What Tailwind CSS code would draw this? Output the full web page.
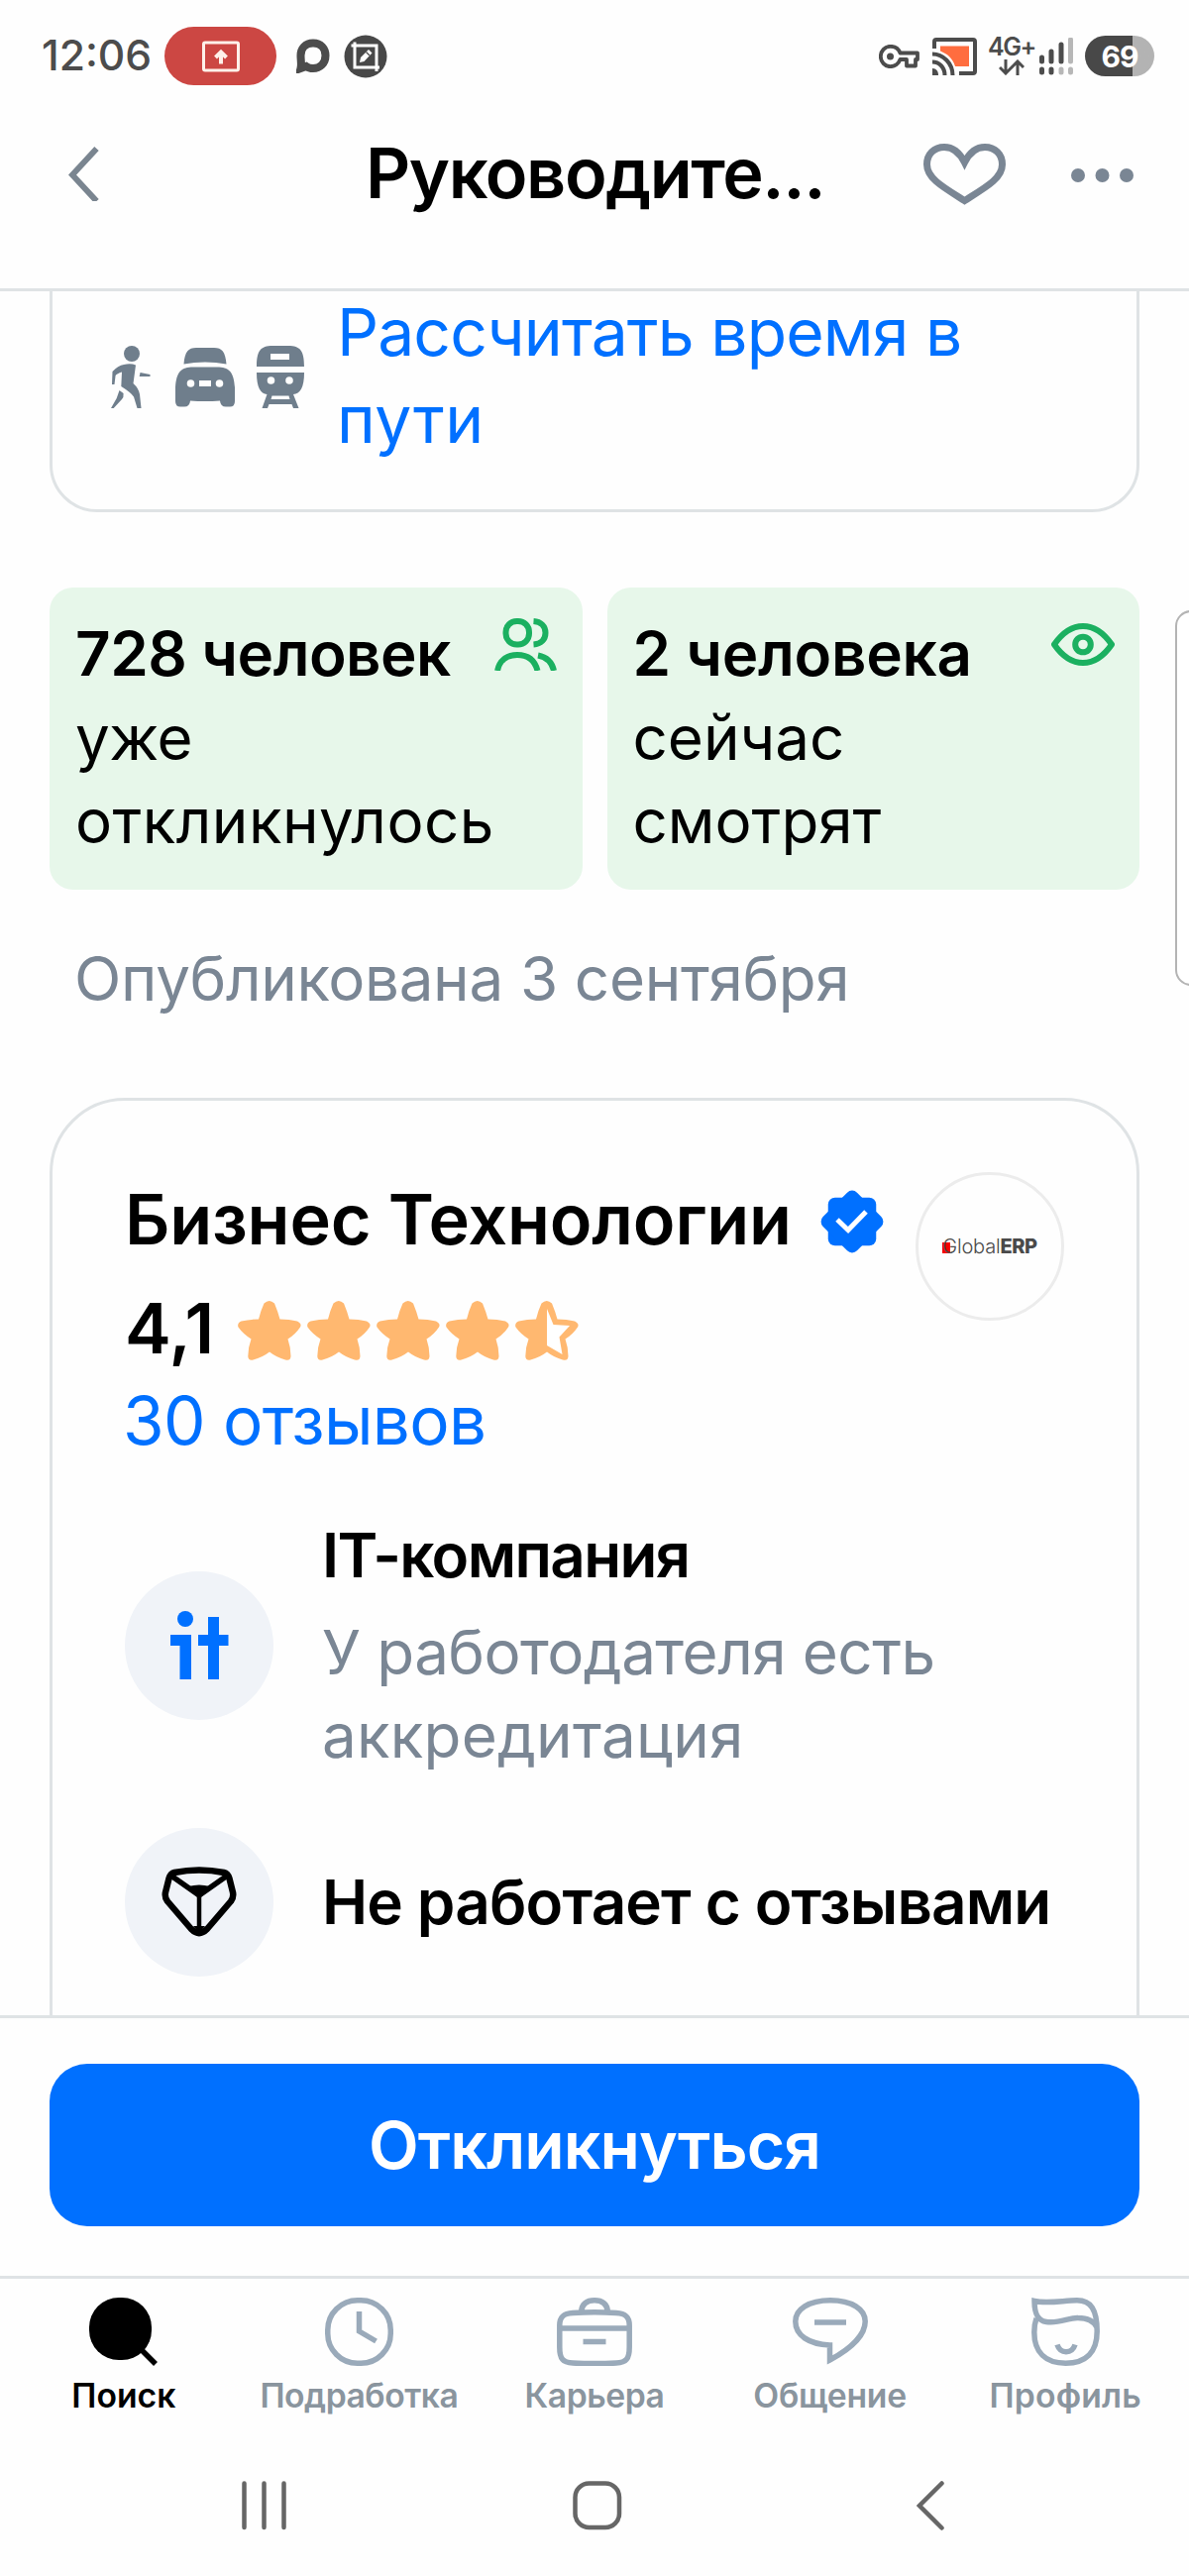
<!DOCTYPE html>
<html lang="ru">
<head>
<meta charset="utf-8">
<title>Вакансия</title>
<script src="https://cdn.jsdelivr.net/npm/@tailwindcss/browser@4"></script>
</head>
<body class="bg-white">
<div class="relative flex h-[2600px] w-[1200px] flex-col overflow-hidden bg-[#fefefe] font-['Inter','Noto_Sans',sans-serif] text-black">

  <!-- System status bar -->
  <div class="flex h-[113px] shrink-0 items-center justify-between pl-[42px] pr-[35px] text-[#4c4c4c]">
    <div class="flex items-center">
      <span class="w-[124px] whitespace-nowrap text-[42.6px] leading-none font-medium">12:06</span>
      <span class="flex h-[59px] w-[113px] items-center justify-center rounded-full bg-[#cc4743]">
        <svg width="38" height="32" viewBox="0 0 38 32" fill="none" stroke="#fff1ea" stroke-width="3"><rect x="1.5" y="2" width="35" height="28" rx="1.5"/><path d="M19 23.500V12M13.500 17L19 11.500L24.500 17" stroke-width="4"/></svg>
      </span>
      <svg class="ml-5" width="34" height="35" viewBox="0 0 34 35"><path d="M17 4.500C25 4.500 29.500 10 29.500 17C29.500 25 24 30 17 30C14 30 12 29.500 10 28L4.500 30C5.500 26 4.500 22 4.500 17C4.500 10 9 4.500 17 4.500Z" fill="none" stroke="#4c4c4c" stroke-width="8"/></svg>
      <svg class="ml-3.5" width="44" height="44" viewBox="0 0 44 44"><circle cx="22" cy="22" r="21.500" fill="#484848"/><path d="M11 7.500V33H36M7.500 11H33V37" fill="none" stroke="#fff" stroke-width="3"/><path d="M16 28L17 23L25 15L28.500 18.500L20.500 27Z" fill="#fff"/><path d="M22.500 17.500L26 21" stroke="#484848" stroke-width="1.200"/></svg>
    </div>
    <div class="flex items-center">
      <svg width="41" height="24" viewBox="0 0 41 24" fill="none" stroke="#4c4c4c" stroke-width="3.800"><path d="M21.500 8.500H39V15H37V21.500H28V15H21.500C20 19 16 22.200 11.500 22.200C6 22.200 1.800 17.500 1.800 12C1.800 6.500 6 1.800 11.500 1.800C16 1.800 20 4.500 21.500 8.500Z" stroke-linejoin="round"/><circle cx="11.500" cy="12" r="3.500" fill="#4c4c4c" stroke="none"/></svg>
      <svg class="ml-[13px]" width="45" height="38" viewBox="0 0 45 38" fill="none" stroke="#4c4c4c" stroke-width="4"><path d="M8 8.500H37V29H23C20 20 15 16.500 8 13.500Z" fill="#ff6d3f" stroke="none"/><path d="M2 11V4Q2 2 4 2H41Q43 2 43 4V34Q43 36 41 36H27"/><path d="M0 16.500C11 16.500 20.500 26 20.500 38M0 24.500C7 24.500 12.500 30 12.500 38"/><path d="M0 31C4 31 6 34 6 38H0Z" fill="#4c4c4c" stroke="none"/></svg>
      <div class="ml-[11px] flex w-[51px] flex-col items-start gap-1">
        <span class="text-[25px] leading-[18px] font-semibold tracking-[-1.500px] whitespace-nowrap">4G+</span>
        <svg class="ml-[11px]" width="26" height="16" viewBox="0 0 26 16" fill="none" stroke="#4c4c4c" stroke-width="3"><path d="M7 0V14M1 8L7 14L13 8M19 16V2M13 8L19 2L25 8"/></svg>
      </div>
      <svg class="ml-px" width="34" height="38" viewBox="0 0 34 38" stroke-width="5"><path d="M2.500 20V24M12 14V24M22 7V24M2.500 32V35M12 32V35" stroke="#4c4c4c" stroke-linecap="round"/><path d="M31.500 2V24M22 32V35M31.500 32V35" stroke="#b7b7b7" stroke-linecap="round"/></svg>
      <div class="ml-3 flex h-[41px] w-[70px] items-center justify-center rounded-full bg-linear-to-r from-[#484848] from-[68%] to-[#b3b3b3] to-[68%] text-[30px] leading-none font-bold tracking-[-1px] text-white">69</div>
    </div>
  </div>

  <!-- App header -->
  <header class="flex h-[181px] shrink-0 items-center border-b-[3px] border-[#dfe3e5] pr-[52px] pb-[55px] pl-[69px]">
    <svg width="31" height="56" viewBox="0 0 31 56" fill="none" stroke="#7a8590" stroke-width="6"><path d="M28.500 3L4 29.500L28.500 56"/></svg>
    <h1 class="ml-[269px] w-[563px] pt-px text-[70.2px] leading-none font-semibold tracking-[-1.4px] whitespace-nowrap">Руководите...</h1>
    <svg class="mt-[2px] shrink-0" width="83" height="62" viewBox="0 0 83 62" fill="none" stroke="#7a8694" stroke-width="7"><path d="M41.500 19C36 8 29 3.500 21 3.500C11 3.500 3.500 10.500 3.500 21C3.500 35 20 44 41.500 57.500C63 44 79.500 35 79.500 21C79.500 10.500 72 3.500 62 3.500C54 3.500 47 8 41.500 19Z"/></svg>
    <svg class="ml-[66px] mt-[5px] shrink-0" width="63" height="14" viewBox="0 0 63 14" fill="#7a8694"><circle cx="7" cy="7" r="7"/><circle cx="31.500" cy="7" r="7"/><circle cx="56" cy="7" r="7"/></svg>
  </header>

  <!-- Scrollable content -->
  <main class="h-[1740px] shrink-0 overflow-hidden px-[50px]">
    <section class="mt-[-44px] flex h-[267px] items-start rounded-b-[48px] border-[3px] border-[#dfe3e5] pt-[39px] pl-[59px]">
      <div class="flex w-[228px] shrink-0 pt-[57px]">
        <svg width="40" height="63" viewBox="0 0 40 63" fill="#6f7e8c"><circle cx="21" cy="8" r="8"/><path d="M13 19Q20 17.500 25 19.500L22.500 38Q28 43 29 49L30.500 63H26.500L23 51.500Q20 47 10.300 41L11 26.500Q6 28 4.600 30L3.500 39H1L1.500 26Q7 20 13 19Z"/><path d="M8.500 45L12.600 48Q13 52 11 54L2.700 63H0L5.700 53Z"/><path d="M29.500 27L39.500 29V31L28.700 31Z"/></svg>
        <svg class="ml-[25px] mt-[2px]" width="60" height="60" viewBox="0 0 60 60" fill="#6f7e8c" fill-rule="evenodd"><path d="M8.500 16.500C9.500 4 13 0 21 0H39C47 0 50.500 4 51.500 16.500Q30 12.500 8.500 16.500Z"/><path d="M0 54V40C1 24 6 19.500 18 19.500H42C54 19.500 59 24 60 40V54Q60 59.500 55 59.500H51Q45.500 59.500 45 53.500Q30 54.500 15 53.500Q14.500 59.500 9 59.500H5Q0 59.500 0 54ZM15.500 32.200A3.800 3.800 0 1 0 15.500 39.800A3.800 3.800 0 1 0 15.500 32.200ZM44.500 32.200A3.800 3.800 0 1 0 44.500 39.800A3.800 3.800 0 1 0 44.500 32.200ZM24 33V39H36V33Z"/></svg>
        <svg class="ml-[22px]" width="48" height="63" viewBox="0 0 48 63" fill="#6f7e8c" fill-rule="evenodd"><path d="M0 21C0 5 4 0 16 0H32C44 0 48 5 48 21ZM14 8V14H33V8Z"/><path d="M0 27H48C48 42 44 48.500 37 49L42.500 63H37L35.500 59H12.500L11 63H5.500L10.500 49C4 48.500 0 42 0 27ZM14.500 31.200A3.800 3.800 0 1 0 14.500 38.800A3.800 3.800 0 1 0 14.500 31.200ZM33 31.200A3.800 3.800 0 1 0 33 38.800A3.800 3.800 0 1 0 33 31.200ZM15.500 50.500L14.500 54H33.500L32.500 50.500Z"/></svg>
      </div>
      <a class="w-[700px] text-[66px] leading-[87.500px] tracking-[-0.92px] text-[#0070ff]">Рассчитать время в<br><span class="tracking-[0.500px]">пути</span></a>
    </section>

    <section class="mt-[76px] grid grid-cols-2 gap-[25px]">
      <div class="flex h-[305px] justify-between rounded-3xl bg-[#e7f7ea] pt-[25px] pr-[26px] pl-[26px] text-[61.900px] leading-[84.500px]">
        <p class="whitespace-nowrap"><span class="font-semibold tracking-[-0.520px]">728 человек</span><br><span class="tracking-[-0.500px]">уже</span><br><span class="tracking-[0.450px]">откликнулось</span></p>
        <svg class="mt-[6px] -ml-20 shrink-0" width="63" height="53" viewBox="0 0 63 53" fill="none" stroke="#1bb060" stroke-width="6"><rect x="11.500" y="3" width="23.500" height="23.500" rx="11"/><path d="M39.500 3C47 3.500 51.500 8 51.500 14.700C51.500 21.500 47 26 39.500 26.500M3 53C5 43 12 37 23 37C34 37 41 43 43.500 53M44 37.500C52 39 58 44 60 53"/></svg>
      </div>
      <div class="flex h-[305px] justify-between rounded-3xl bg-[#e7f7ea] pt-[25px] pr-[25px] pl-[26px] text-[61.900px] leading-[84.500px]">
        <p class="whitespace-nowrap"><span class="font-semibold tracking-[-0.240px]">2 человека</span><br>сейчас<br>смотрят</p>
        <svg class="mt-[11px] shrink-0" width="64" height="43" viewBox="0 0 64 43" fill="none" stroke="#1bb060" stroke-width="6"><path d="M3 21.500C12 8.500 21 3 32 3C43 3 52 8.500 61 21.500C52 34.500 43 40 32 40C21 40 12 34.500 3 21.500Z" stroke-linejoin="round"/><circle cx="32" cy="21.500" r="7.800" stroke-width="6"/></svg>
      </div>
    </section>

    <p class="mt-[48px] pl-[25px] text-[61.900px] leading-[84px] tracking-[-0.33px] text-[#7a8694]">Опубликована 3 сентября</p>

    <!-- Employer card -->
    <section class="mt-[78px] h-[1000px] rounded-t-[76px] border-[3px] border-[#dfe3e5] px-[73px] pt-[72px]">
      <div class="flex h-[110px]">
        <h2 class="w-[703px] text-[70.200px] leading-[96px] font-semibold tracking-[-0.200px] whitespace-nowrap">Бизнес Технологии</h2>
        <svg class="mt-[18px] shrink-0" width="64" height="64" viewBox="0 0 64 64"><g fill="#0070ff"><rect x="7.750" y="7.750" width="48.500" height="48.500" rx="7"/><rect x="7.750" y="7.750" width="48.500" height="48.500" rx="7" transform="rotate(45 32 32)"/></g><path d="M17 30L28 40.500L46 22" fill="none" stroke="#fff" stroke-width="5"/></svg>
        <div class="ml-[32px] flex size-[150px] shrink-0 items-center justify-center rounded-full border-[3px] border-[#ececec] text-[20px] leading-none text-[#4a4a4a]">
          <span class="relative z-0 font-light tracking-[-0.2px]"><span class="absolute top-[6px] left-0 -z-10 h-[11px] w-[8px] bg-[#f50000]"></span>Global</span><span class="font-extrabold tracking-[-0.4px]">ERP</span>
        </div>
      </div>
      <div class="flex h-[96px] items-center">
        <span class="w-[114px] text-[70.200px] leading-none font-semibold">4,1</span>
        <div class="flex gap-[6px] pt-[4px]">
          <svg width="64" height="60" viewBox="0 0 64 60" fill="#ffb870"><path id="star" d="M26.500 2.500Q31.800-2.500 37 2.500Q40.500 11 42.500 18.500Q52 18.500 60 20.500Q65 23 63 26.500Q58 34 50.500 38.500Q53.500 47 53.500 56Q53 61 48 59.500Q39 57 32 51.500Q25 57 15.500 59.500Q10.500 60.500 10.300 56Q10.300 47 13.500 38.500Q5 33 .500 26.500Q-1 22.500 3.500 20.500Q12 18.500 21 18.500Q23 10 26.500 2.500Z"/></svg>
          <svg width="64" height="60" viewBox="0 0 64 60" fill="#ffb870"><use href="#star"/></svg>
          <svg width="64" height="60" viewBox="0 0 64 60" fill="#ffb870"><use href="#star"/></svg>
          <svg width="64" height="60" viewBox="0 0 64 60" fill="#ffb870"><use href="#star"/></svg>
          <svg width="64" height="60" viewBox="0 0 64 60" fill="#ffb870"><use href="#star"/><path d="M32 8L38.500 24L55 25L44.500 36.500L47.500 54L32 45Z" fill="#fff"/></svg>
        </div>
      </div>
      <a class="-ml-[2px] block h-[139px] pt-px text-[67.400px] leading-[88px] tracking-[-0.690px] text-[#0070ff]">30 отзывов</a>
      <div class="flex items-center">
        <div class="flex size-[150px] shrink-0 items-center justify-center rounded-full bg-[#f0f3f8]">
          <svg width="60" height="70" viewBox="0 0 60 70" fill="#0070ff"><circle cx="16" cy="8" r="8"/><path d="M1 24H22V69H10.500V35H1ZM29 24H39V6H50V24H59.500V35H50V69H39V35H29Z"/></svg>
        </div>
        <div class="ml-[49px] text-[61.900px] leading-[84px]">
          <h3 class="font-semibold tracking-[-1.600px]">IT-компания</h3>
          <p class="mt-[14px] tracking-[-0.550px] whitespace-nowrap text-[#7a8694]">У работодателя есть<br><span class="tracking-[0.240px]">аккредитация</span></p>
        </div>
      </div>
      <div class="mt-[51px] flex items-center">
        <div class="flex size-[150px] shrink-0 items-center justify-center rounded-full bg-[#f0f3f8]">
          <svg width="76" height="72" viewBox="0 0 76 72" fill="none" stroke="#000" stroke-width="6.500" stroke-linejoin="round"><path d="M13 6Q38 1 63 6Q67 7 68.500 12L72 26Q73 31 70 35L46 63Q38 71 30 63L6 35Q3 31 4 26L7.500 12Q9 7 13 6Z"/><path d="M11 10L38 29L65 10" stroke-width="5.500"/><path d="M38 28V66" stroke-width="4.500"/><path d="M27 20Q38 17 49 20L38 31Z" fill="#000" stroke="none"/><path d="M32 60H44L38 67Z" fill="#000" stroke="none"/></svg>
        </div>
        <h3 class="ml-[49px] text-[61.900px] leading-[84px] font-semibold tracking-[-0.830px] whitespace-nowrap">Не работает с отзывами</h3>
      </div>
    </section>
  </main>

  <!-- Apply button -->
  <div class="h-[263px] shrink-0 border-t-[3px] border-[#dfe3e5] px-[50px] pt-[46px]">
    <button class="block h-[164px] w-full rounded-[38px] bg-[#0070ff] pb-px text-[66px] leading-none font-semibold tracking-[-0.900px] text-white">Откликнуться</button>
  </div>

  <!-- Tab bar -->
  <nav class="grid h-[160px] shrink-0 grid-cols-5 border-t-[3px] border-[#dfe3e5] px-[6px] pt-[19px] text-[33.700px] leading-[34px] font-semibold text-[#8a959e]">
    <div class="flex flex-col items-center gap-[13px] text-black"><svg width="69" height="69" viewBox="0 0 69 69"><rect width="63" height="63" rx="30"/><path d="M50 50L67 67" stroke="#000" stroke-width="5.500"/></svg><span>Поиск</span></div>
    <div class="flex flex-col items-center gap-[13px]"><svg width="69" height="69" viewBox="0 0 69 69" fill="none" stroke="#9aaaba" stroke-width="5.500"><rect x="2.750" y="2.750" width="63.500" height="63.500" rx="30"/><path d="M34.500 14V34L51.500 44"/></svg><span class="tracking-[-0.480px]">Подработка</span></div>
    <div class="flex flex-col items-center gap-[13px]"><svg width="76" height="69" viewBox="0 0 76 69" fill="none" stroke="#9aaaba" stroke-width="5.500"><path d="M16 15.500Q38 14 60 15.500C70 16 73.200 20 73.200 28V50C73.200 62 70 65.500 60 66Q38 67 16 66C6 65.500 2.800 62 2.800 50V28C2.800 20 6 16 16 15.500ZM3 31H73M26.500 44.500H49.500M24.500 14C25.500 6 30 2.800 38 2.800C46 2.800 50.500 6 51.500 14"/></svg><span class="tracking-[-0.470px]">Карьера</span></div>
    <div class="flex flex-col items-center gap-[13px]"><svg width="76" height="69" viewBox="0 0 76 69" fill="none" stroke="#9aaaba" stroke-width="5.500"><path d="M38 2.800C60 2.800 73.200 12 73.200 24C73.200 37 60 51 37.500 63V48C16 47 2.800 38 2.800 24C2.800 12 16 2.800 38 2.800ZM22 25H54"/></svg><span class="tracking-[-0.240px]">Общение</span></div>
    <div class="flex flex-col items-center gap-[13px]"><svg width="69" height="69" viewBox="0 0 69 69" fill="none" stroke="#9aaaba" stroke-width="5.500"><path d="M5 21C3.500 25 2.800 29 2.800 35C2.800 55 14 66.200 34.500 66.200C55 66.200 66.200 55 66.200 34C66.200 12 60 2.800 46 2.800C33 2.800 16 6.500 3 3.500C3 14 5 23 15 24.500C28 26.500 38 20 47 20.500C56 20.500 63 24 66 30M26 47.500C29 57 41 57 44 47.500"/></svg><span class="tracking-[0.200px]">Профиль</span></div>
  </nav>

  <!-- Android navigation -->
  <div class="flex grow items-start pt-[47px] pl-[244px]">
    <svg width="46" height="50" viewBox="0 0 46 50" stroke="#666" stroke-width="4.500" stroke-linecap="round"><path d="M2.500 2.500V47M22.500 2.500V47M42.500 2.500V47"/></svg>
    <svg class="ml-[288px]" width="50" height="50" viewBox="0 0 50 50" fill="none" stroke="#666" stroke-width="4.500"><rect x="2.500" y="2.500" width="44.500" height="44.500" rx="14"/></svg>
    <svg class="ml-[297px]" width="29" height="50" viewBox="0 0 29 50" fill="none" stroke="#666" stroke-width="4.500" stroke-linecap="round"><path d="M25.500 2.500L3 25L25.500 47.500"/></svg>
  </div>

  <!-- Edge panel handle -->
  <div class="absolute top-[616px] left-[1186px] h-[379px] w-10 rounded-2xl border-2 border-[#b4b4b4] bg-white"></div>
</div>
</body>
</html>
